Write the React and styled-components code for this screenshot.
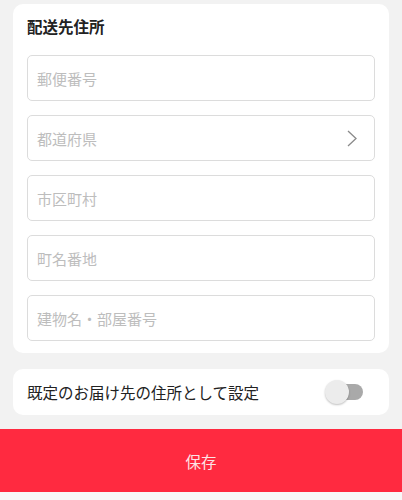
import React, { useState } from "react";
import styled, { createGlobalStyle } from "styled-components";

const GlobalStyle = createGlobalStyle`
	body {
		margin: 0;
		background: #f2f2f2;
		font-family: "Noto Sans CJK JP", "Noto Sans", sans-serif;
	}
`;

const Page = styled.div`
	width: 402px;
	height: 500px;
	overflow: hidden;
	background: #f2f2f2;
	display: flex;
	flex-direction: column;
`;

const Content = styled.div`
	padding: 4px 13px 0;
	display: flex;
	flex-direction: column;
	gap: 16px;
`;

const Card = styled.div`
	background: #fff;
	border-radius: 10px;
	padding: ${props => props.padding || "0 14px"};
`;

const Title = styled.h2`
	margin: 0 0 12px;
	height: 34px;
	line-height: 34px;
	font-size: 15.5px;
	font-weight: 700;
	color: #222;
`;

const Fields = styled.div`
	display: flex;
	flex-direction: column;
	gap: 14px;
`;

const Field = styled.div`
	height: 46px;
	box-sizing: border-box;
	border: 1px solid #dcdcdc;
	border-radius: 5px;
	display: flex;
	align-items: center;
	justify-content: space-between;
	padding: 0 17px 0 9px;
`;

const Placeholder = styled.span`
	font-size: 15px;
	color: #bdbdbd;
`;

const Row = styled.div`
	height: 46px;
	display: flex;
	align-items: center;
	justify-content: space-between;
	padding-right: 12px;
`;

const Label = styled.span`
	font-size: 15.5px;
	color: #222;
`;

const Toggle = styled.button`
	position: relative;
	width: 38px;
	height: 24px;
	padding: 0;
	border: none;
	background: transparent;
	cursor: pointer;
`;

const Track = styled.span`
	position: absolute;
	left: 12px;
	right: 0;
	top: 4px;
	height: 16px;
	border-radius: 8px;
	background: ${props => (props.on ? "#ff2a40" : "#a9a9a9")};
`;

const Knob = styled.span`
	position: absolute;
	top: 0;
	left: ${props => (props.on ? "14px" : "0")};
	width: 24px;
	height: 24px;
	border-radius: 50%;
	background: #ececec;
	box-shadow: 0 1px 2px rgba(0, 0, 0, 0.25);
`;

const SaveButton = styled.button`
	margin-top: 14px;
	height: 63px;
	width: 100%;
	border: none;
	background: #ff2a40;
	color: #fde3e6;
	font-family: inherit;
	font-size: 15.5px;
	cursor: pointer;
`;

const Footer = styled.div`
	flex: 1;
	background: #f8f8f8;
`;

const Chevron = () => (
	<svg width="10" height="17" viewBox="0 0 10 17" fill="none">
		<path d="M1 1l8 7.5L1 16" stroke="#8a8a8a" strokeWidth="1.3" />
	</svg>
);

const fields = [
	{ label: "郵便番号" },
	{ label: "都道府県", select: true },
	{ label: "市区町村" },
	{ label: "町名番地" },
	{ label: "建物名・部屋番号" },
];

export default function App() {
	const [isDefault, setIsDefault] = useState(false);
	return (
		<Page>
			<GlobalStyle />
			<Content>
				<Card padding="5px 14px 12px">
					<Title>配送先住所</Title>
					<Fields>
						{fields.map(f => (
							<Field key={f.label}>
								<Placeholder>{f.label}</Placeholder>
								{f.select && <Chevron />}
							</Field>
						))}
					</Fields>
				</Card>
				<Card>
					<Row>
						<Label>既定のお届け先の住所として設定</Label>
						<Toggle onClick={() => setIsDefault(!isDefault)}>
							<Track on={isDefault} />
							<Knob on={isDefault} />
						</Toggle>
					</Row>
				</Card>
			</Content>
			<SaveButton>保存</SaveButton>
			<Footer />
		</Page>
	);
}
